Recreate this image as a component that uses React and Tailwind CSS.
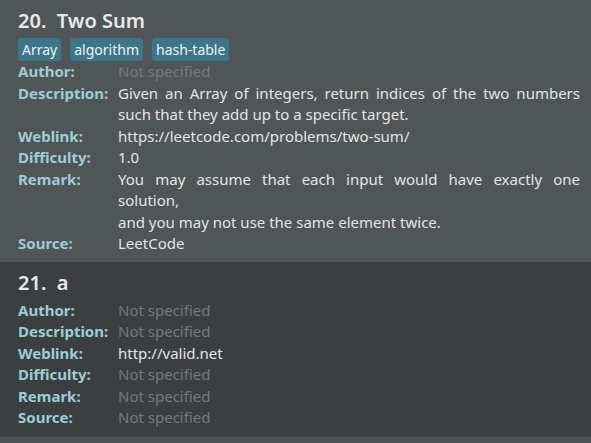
import React from 'react';

const problems = [
  {
    id: 20,
    title: 'Two Sum',
    tags: ['Array', 'algorithm', 'hash-table'],
    author: null,
    description: {
      justified: ['Given an Array of integers, return indices of the two numbers'],
      rest: ['such that they add up to a specific target.'],
    },
    weblink: 'https://leetcode.com/problems/two-sum/',
    difficulty: '1.0',
    remark: {
      justified: ['You may assume that each input would have exactly one'],
      rest: ['solution,', 'and you may not use the same element twice.'],
    },
    source: 'LeetCode',
  },
  {
    id: 21,
    title: 'a',
    tags: [],
    author: null,
    description: null,
    weblink: 'http://valid.net',
    difficulty: null,
    remark: null,
    source: null,
  },
];

const Value = ({ value }) => {
  if (!value) return <span className="text-[#76797c]">Not specified</span>;
  if (typeof value === 'string') return <span className="text-[#e3e4e5]">{value}</span>;
  return (
    <div className="text-[#e3e4e5]">
      {value.justified.map((line, i) => (
        <div key={'j' + i} className="text-justify [text-align-last:justify]">{line}</div>
      ))}
      {value.rest.map((line, i) => (
        <div key={'r' + i}>{line}</div>
      ))}
    </div>
  );
};

const ProblemCard = ({ problem, dark }) => {
  const rows = [
    ['Author:', problem.author],
    ['Description:', problem.description],
    ['Weblink:', problem.weblink],
    ['Difficulty:', problem.difficulty],
    ['Remark:', problem.remark],
    ['Source:', problem.source],
  ];

  return (
    <div className={dark ? 'bg-[#3c3f41] pl-[18px] pr-[11px] pt-2 pb-2' : 'bg-[#505558] pl-[18px] pr-[11px] pt-2 pb-[7px]'}>
      <h2 className="text-[20px] leading-[26px] font-semibold text-[#e8e8e8] mb-1 whitespace-pre">
        {problem.id + '.  ' + problem.title}
      </h2>
      {problem.tags.length > 0 && (
        <div className="flex gap-[9px]">
          {problem.tags.map(tag => (
            <span key={tag} className="bg-[#3d7589] text-[#eef3f5] text-[14px] leading-[23px] px-[4px] rounded-[3px]">
              {tag}
            </span>
          ))}
        </div>
      )}
      <div className="grid grid-cols-[100px_1fr] text-[15px] leading-[21.5px]">
        {rows.map(([label, value]) => (
          <React.Fragment key={label}>
            <div className="font-bold text-[#9dcdd4]">{label}</div>
            <Value value={value} />
          </React.Fragment>
        ))}
      </div>
    </div>
  );
};

export default function App() {
  return (
    <div className="min-h-screen bg-[#4f5356]" style={{ fontFamily: '"Noto Sans", "Open Sans", sans-serif' }}>
      {problems.map((p, i) => (
        <ProblemCard key={p.id} problem={p} dark={i % 2 === 1} />
      ))}
    </div>
  );
}
